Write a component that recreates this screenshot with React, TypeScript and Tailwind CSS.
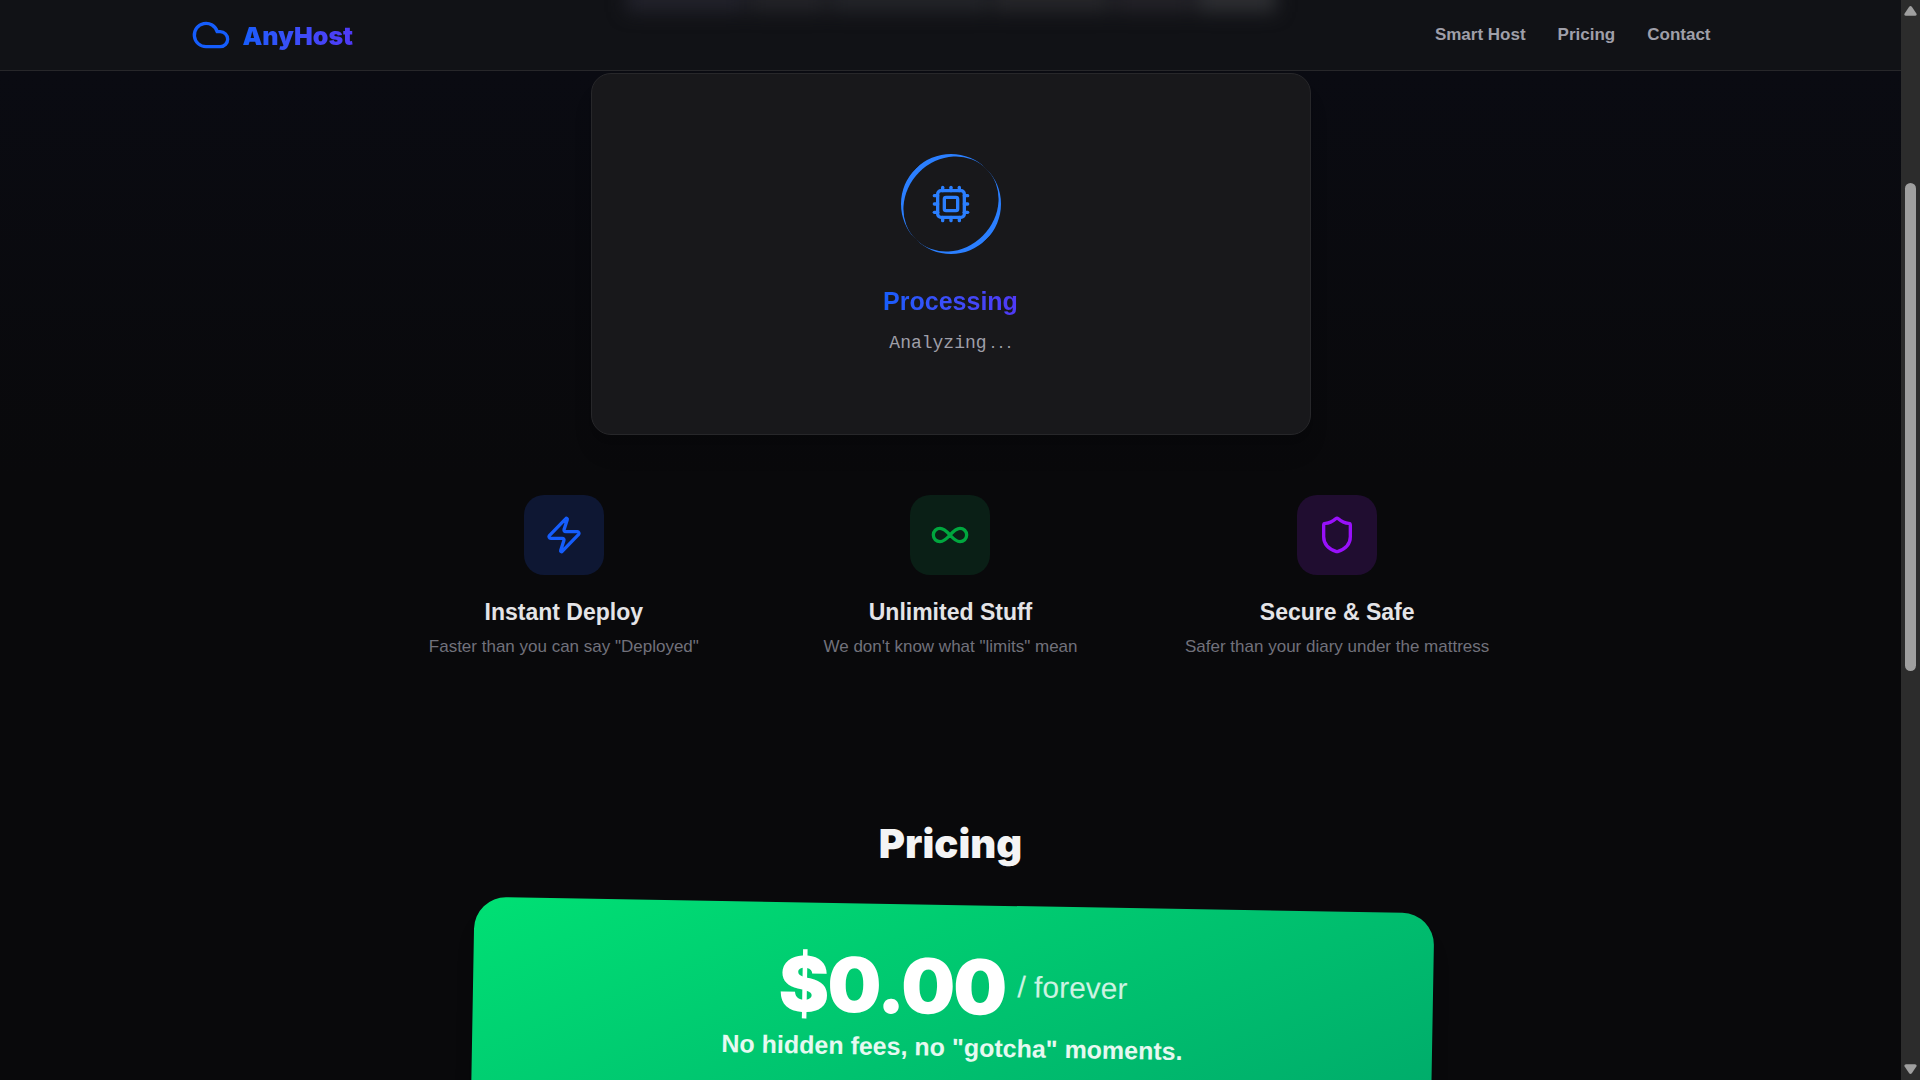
import { Cloud, Cpu, Zap, Infinity as InfinityIcon, Shield } from "lucide-react";
import type { LucideIcon } from "lucide-react";

type Feature = {
  title: string;
  text: string;
  Icon: LucideIcon;
  tile: string;
};

const links = [
  { label: "Smart Host", href: "#host" },
  { label: "Pricing", href: "#pricing" },
  { label: "Contact", href: "#contact" },
];

const features: Feature[] = [
  {
    title: "Instant Deploy",
    text: 'Faster than you can say "Deployed"',
    Icon: Zap,
    tile: "bg-[#0e1733] text-[#155dfc]",
  },
  {
    title: "Unlimited Stuff",
    text: 'We don\'t know what "limits" mean',
    Icon: InfinityIcon,
    tile: "bg-[#0a1f16] text-[#00a63e]",
  },
  {
    title: "Secure & Safe",
    text: "Safer than your diary under the mattress",
    Icon: Shield,
    tile: "bg-[#200d30] text-[#9810fa]",
  },
];

function Header() {
  return (
    <header className="relative shrink-0 overflow-hidden border-b border-[#27272a] bg-[#111216]">
      {/* glow of the scrolled heading behind the bar */}
      <div className="absolute inset-x-0 -top-4 mx-auto flex h-7 w-[650px] gap-1 blur-[9px]">
        <div className="flex-3 bg-[#22222b]" />
        <div className="flex-2 bg-[#232328]" />
        <div className="flex-4 bg-[#232429]" />
        <div className="flex-3 bg-[#26262a]" />
        <div className="flex-2 bg-[#232228]" />
        <div className="flex-2 bg-[#2e2f33]" />
      </div>
      <div className="relative mx-auto flex h-[70px] max-w-[1536px] items-center justify-between px-2">
        <a href="#top" className="flex items-center gap-3">
          <Cloud size={40} className="text-[#155dfc]" />
          <span className="bg-gradient-to-r from-[#155dfc] to-[#4f39f6] bg-clip-text pt-0.5 font-[Inter,sans-serif] text-[25px] leading-8 font-black text-transparent">
            AnyHost
          </span>
        </a>
        <nav className="flex gap-8">
          {links.map((l) => (
            <a key={l.label} href={l.href} className="text-[17px] leading-7 font-bold text-[#9f9fa9]">
              {l.label}
            </a>
          ))}
        </nav>
      </div>
    </header>
  );
}

function StatusCard() {
  return (
    <section
      id="host"
      className="mx-auto flex w-full max-w-[720px] flex-col items-center rounded-[20px] border border-[#27272a] bg-[#18181b] px-8 pt-20 pb-[77px] shadow-xl"
    >
      <div className="relative flex size-[100px] items-center justify-center text-[#2b7fff]">
        <div className="absolute inset-0 -rotate-45 rounded-full border-y-5 border-[#2b7fff]" />
        <Cpu size={40} />
      </div>
      <h2 className="mt-[31px] bg-gradient-to-r from-[#155dfc] to-[#4f39f6] bg-clip-text text-[25px] leading-8 font-bold text-transparent">
        Processing
      </h2>
      <p className="mt-[11px] flex items-baseline gap-1 font-['Liberation_Mono',monospace] text-lg text-[#9f9fa9]">
        <span>Analyzing</span>
        <span className="flex gap-[3px] font-['Liberation_Sans',sans-serif]">
          <span>.</span>
          <span>.</span>
          <span>.</span>
        </span>
      </p>
    </section>
  );
}

function Features() {
  return (
    <section className="mx-auto mt-15 grid w-full max-w-[1160px] grid-cols-3">
      {features.map(({ title, text, Icon, tile }) => (
        <article key={title} className="flex flex-col items-center text-center">
          <div className={"flex size-20 items-center justify-center rounded-[20px] " + tile}>
            <Icon size={40} />
          </div>
          <h3 className="mt-5 text-[23px] leading-[34px] font-bold text-[#e4e4e7]">{title}</h3>
          <p className="mt-1 text-[17px] leading-7 text-[#71717b]">{text}</p>
        </article>
      ))}
    </section>
  );
}

function Pricing() {
  return (
    <section id="pricing" className="mt-[159px] flex flex-col items-center">
      <h2 className="font-[Inter,sans-serif] text-[40px] leading-12 font-black text-[#f4f4f5]">Pricing</h2>
      <div className="mt-[37px] h-[400px] w-full max-w-[960px] rotate-1 rounded-[32px] bg-gradient-to-br from-[#00e074] to-[#009966] px-10 pt-9 text-center text-white shadow-xl">
        <p className="flex items-center justify-center gap-3">
          <span className="font-[Inter,sans-serif] text-[76px] leading-[90px] font-black tracking-tight">$0.00</span>
          <span className="text-3xl text-white/80">/ forever</span>
        </p>
        <p className="text-[25px] leading-8 font-bold text-white/90">No hidden fees, no "gotcha" moments.</p>
      </div>
    </section>
  );
}

function Scrollbar() {
  return (
    <div aria-hidden="true" className="flex w-[19px] shrink-0 flex-col items-center justify-between bg-[#2c2c2c] py-[5px]">
      <svg width="13" height="11" viewBox="0 0 13 11" fill="#9f9f9f">
        <path d="M6.5 1Q7.3 1 8 2L12.4 8.5Q13.2 10.6 11 10.8H2Q-.2 10.6.6 8.5L5 2Q5.7 1 6.5 1Z" />
      </svg>
      <div className="flex w-full flex-1 flex-col items-center">
        <div className="h-[167px]" />
        <div className="h-[488px] w-[11px] rounded-full bg-[#9f9f9f]" />
      </div>
      <svg width="13" height="11" viewBox="0 0 13 11" fill="#9f9f9f">
        <path d="M6.5 10Q7.3 10 8 9L12.4 2.5Q13.2.4 11 .2H2Q-.2.4.6 2.5L5 9Q5.7 10 6.5 10Z" />
      </svg>
    </div>
  );
}

export default function App() {
  return (
    <div className="flex h-screen overflow-hidden bg-[#09090b] font-['Liberation_Sans',Arial,sans-serif]">
      <div className="flex min-w-0 flex-1 flex-col overflow-hidden">
        <Header />
        <main className="flex-1 overflow-hidden bg-gradient-to-b from-[#0a0b12] to-[#09090b] to-40% pt-0.5">
          <StatusCard />
          <Features />
          <Pricing />
        </main>
      </div>
      <Scrollbar />
    </div>
  );
}
